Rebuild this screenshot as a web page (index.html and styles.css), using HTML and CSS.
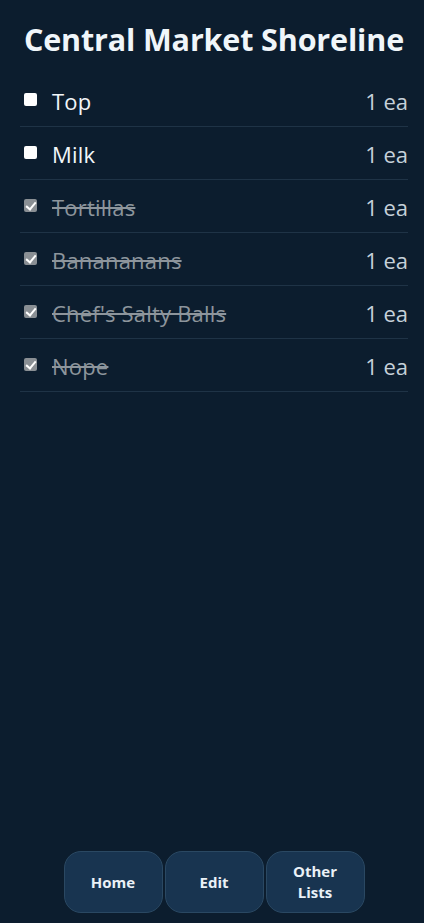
FILE: index.html
```
<!DOCTYPE html>
<html lang="en">
<head>
<meta charset="utf-8">
<title>Central Market Shoreline</title>
<link rel="stylesheet" href="styles.css">
</head>
<body>
<div class="app">
  <h1 class="title">Central Market Shoreline</h1>
  <ul class="list">
    <li class="item"><span class="box"></span><span class="name">Top</span><span class="qty">1 ea</span></li>
    <li class="item"><span class="box"></span><span class="name">Milk</span><span class="qty">1 ea</span></li>
    <li class="item done"><span class="box"></span><span class="name">Tortillas</span><span class="qty">1 ea</span></li>
    <li class="item done"><span class="box"></span><span class="name">Banananans</span><span class="qty">1 ea</span></li>
    <li class="item done"><span class="box"></span><span class="name">Chef's Salty Balls</span><span class="qty">1 ea</span></li>
    <li class="item done"><span class="box"></span><span class="name">Nope</span><span class="qty">1 ea</span></li>
  </ul>
  <nav class="footer">
    <button class="btn">Home</button>
    <button class="btn">Edit</button>
    <button class="btn">Other<br>Lists</button>
  </nav>
</div>
</body>
</html>
```
FILE: styles.css
```
* { box-sizing: border-box; }
html, body { margin: 0; padding: 0; height: 100%; }
body {
  background: #0c1d2e;
  color: #eef3f7;
  font-family: "Open Sans", "Noto Sans", sans-serif;
}
.app {
  min-height: 100%;
  display: flex;
  flex-direction: column;
  padding: 0 16px 10px 20px;
}
.title {
  margin: 18px 0 0;
  text-align: center;
  font-size: 30.5px;
  font-weight: 700;
  line-height: 42px;
  letter-spacing: -0.15px;
  color: #f0f6fa;
}
.list {
  list-style: none;
  margin: 14px 0 0;
  padding: 0;
  flex: 1;
}
.item {
  display: flex;
  align-items: center;
  height: 53px;
  border-bottom: 1px solid #1f3346;
  padding: 2px 0 0 4px;
  font-size: 22px;
}
.box {
  width: 13px;
  height: 13px;
  background: #ffffff;
  border-radius: 2px;
  margin-right: 15px;
  flex: none;
  position: relative;
  top: -2px;
}
.done .box {
  background: #8a8f94;
}
.done .box::after {
  content: "";
  position: absolute;
  left: 4px;
  top: 1px;
  width: 4px;
  height: 8px;
  border: solid #fff;
  border-width: 0 2px 2px 0;
  transform: rotate(40deg);
}
.name { flex: 1; color: #f2f6f9; letter-spacing: 0.2px; }
.done .name {
  color: #8d959c;
  text-decoration: line-through;
  text-decoration-color: #8d959c;
}
.qty { color: #c6d1da; }
.footer {
  display: flex;
  justify-content: center;
  gap: 2px;
}
.btn {
  width: 99px;
  height: 62px;
  background: #183450;
  border: 1px solid #2a4862;
  border-radius: 17px;
  color: #eaf1f7;
  font-family: "Open Sans", "Noto Sans", sans-serif;
  font-weight: 700;
  font-size: 15px;
  line-height: 21px;
  padding: 0;
}
```
